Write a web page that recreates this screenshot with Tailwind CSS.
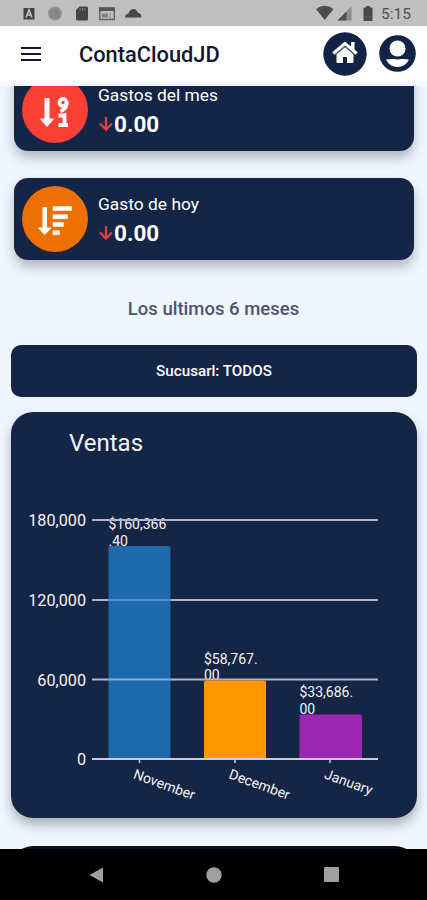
<!DOCTYPE html>
<html lang="es">
<head>
    <meta charset="UTF-8">
    <meta name="viewport" content="width=device-width, initial-scale=1.0">
    <title>ContaCloudJD</title>
    <script src="https://cdn.jsdelivr.net/npm/@tailwindcss/browser@4"></script>
    <style>
        body {
            font-family: Roboto, sans-serif;
        }
    </style>
</head>
<body class="bg-black">
    <div class="flex flex-col w-[427px] h-[900px] overflow-hidden">

        <!-- Barra de estado -->
        <div class="flex items-center justify-between h-[26px] shrink-0 bg-[#bfbfbf] pl-[22px] pr-[16px] text-[#505050]">
            <svg class="h-[26px] w-[122px]" viewBox="0 0 122 26">
                <rect x="1.500" y="8" width="11" height="11.500" fill="#424242"/>
                <path d="M4 17.500L7 10l3 7.500M5 15h4" stroke="#bfbfbf" stroke-width="1.600" fill="none"/>
                <circle cx="33" cy="13.500" r="7" fill="#929292"/>
                <circle cx="33" cy="13.500" r="5" fill="#858585"/>
                <path d="M57.500 6.500h7a1.500 1.500 0 0 1 1.500 1.500v11a1.500 1.500 0 0 1-1.500 1.500h-9a1.500 1.500 0 0 1-1.500-1.500V10z" fill="#444"/>
                <path d="M58 8v2.500M60.500 8v2.500M63 8v2.500" stroke="#858585" stroke-width="1"/>
                <rect x="77.800" y="8" width="14.500" height="11.500" fill="none" stroke="#666" stroke-width="1.500"/>
                <path d="M77 7.500h16v3.500H77z" fill="#555"/>
                <path d="M80 13.500h6v4h-6z" fill="#808080"/>
                <path d="M88 13v6" stroke="#8b8b8b"/>
                <path d="M103 17.500c0-2.500 1.500-3.700 3.500-4 1-2.800 2.600-4.500 4.700-4.500 2.300 0 4 1.500 4.500 3.700 2.300 0 3.800 2 3.800 4.800z" fill="#484848"/>
            </svg>
            <div class="flex items-center gap-[8px]">
                <svg class="h-[26px] w-[58px]" viewBox="0 0 58 26">
                    <path d="M1 9Q9.700 2.500 18.500 9L9.700 20z" fill="#4d4d4d"/>
                    <path d="M36.500 6.500V20.500H22.500z" fill="#8c8c8c"/>
                    <path d="M31.500 11.500v9h-9z" fill="#4f4f4f"/>
                    <path d="M49 7.500h2V6h4v1.500h2a.5.5 0 0 1 .5.500v12.500a.5.500 0 0 1-.5.500h-8a.5.500 0 0 1-.5-.5V8a.5.500 0 0 1 .5-.5z" fill="#4a4a4a"/>
                </svg>
                <span class="text-[15.500px] leading-[26px] pt-[2px]">5:15</span>
            </div>
        </div>

        <!-- Encabezado -->
        <header class="flex items-center h-[55px] shrink-0 bg-white pl-[21px] pr-[11px]">
            <svg class="w-[20px] h-[14px]" viewBox="0 0 20 14">
                <path d="M0 1h20M0 7h20M0 13h20" stroke="#15152f" stroke-width="1.800"/>
            </svg>
            <h1 class="ml-[38px] pt-[2px] text-[21.800px] leading-[28px] font-medium text-[#15152f]">ContaCloudJD</h1>
            <div class="ml-auto flex items-center gap-[12px]">
                <svg class="w-[44px] h-[44px]" viewBox="0 0 44 44">
                    <circle cx="22" cy="22" r="21.700" fill="#122346"/>
                    <path d="M28 10h3.500v9L28 16z" fill="#fff"/>
                    <path d="M10.300 21.500L22 11.300l11.700 10.200" stroke="#fff" stroke-width="3" stroke-linejoin="round" fill="none"/>
                    <path d="M22 15.200l8.500 7.300v7.500a1 1 0 0 1-1 1H24v-6h-4v6h-5.500a1 1 0 0 1-1-1v-7.500z" fill="#fff"/>
                    <path d="M12.500 22.500L22 14.300l9.500 8.200" stroke="#7d869b" stroke-width=".8" fill="none"/>
                </svg>
                <svg class="w-[37px] h-[37px]" viewBox="0 0 37 37">
                    <circle cx="18.500" cy="18.500" r="18.300" fill="#122346"/>
                    <circle cx="18.500" cy="13.500" r="8" fill="#fff"/>
                    <path d="M7 24.600q5 -1 7.500-.6 4 .8 8 0 2.500-.4 7.500.6-3.500 7.400-11.500 7.400T7 24.600z" fill="#fff"/>
                </svg>
            </div>
        </header>
        <div class="h-[5px] shrink-0 bg-[#f5f9ff]"></div>

        <!-- Contenido -->
        <main class="flex flex-col h-[763px] shrink-0 overflow-hidden bg-[#f0f6ff]">
            <section class="flex flex-col gap-[27px] -mt-[17px] mx-[14px]">
                <div class="flex items-center h-[82px] w-[400px] rounded-[14px] bg-[#142545] pl-[8px] shadow-[0_7px_12px_rgba(0,0,0,0.25)]">
                    <svg class="w-[66px] h-[66px]" viewBox="0 0 66 66">
                        <circle cx="33" cy="33" r="33" fill="#fb4034"/>
                        <path d="M23 21.500h4V42h4.500L25 49.500 18.500 42H23z" fill="#fff" stroke="#fff" stroke-linejoin="round"/>
                        <circle cx="41" cy="25.500" r="3.600" fill="none" stroke="#fff" stroke-width="3.600"/>
                        <path d="M44.800 26q0 6-6.300 8.200" fill="none" stroke="#fff" stroke-width="3.600"/>
                        <path d="M36.500 38.500h3l3-.5v10M36.500 48h9.500" fill="none" stroke="#fff" stroke-width="3.800"/>
                    </svg>
                    <div class="ml-[10px] pt-[1px] text-white">
                        <p class="text-[17.400px] leading-[26px]">Gastos del mes</p>
                        <p class="flex items-center pt-[1px] text-[22.500px] leading-[31px] font-bold">
                            <svg class="w-[16px] h-[18px]" viewBox="0 0 16 18"><path d="M8 2v12M2 8.500l6 6 6-6" fill="none" stroke="#e53e44" stroke-width="2.300"/></svg>0.00
                        </p>
                    </div>
                </div>
                <div class="flex items-center h-[82px] w-[400px] rounded-[14px] bg-[#142545] pl-[8px] shadow-[0_7px_12px_rgba(0,0,0,0.25)]">
                    <svg class="w-[66px] h-[66px]" viewBox="0 0 66 66">
                        <circle cx="33" cy="33" r="33" fill="#ee6f02"/>
                        <path d="M21 21.500h3.500V42h4.500L22.700 48.500 16.500 42H21z" fill="#fff" stroke="#fff" stroke-linejoin="round"/>
                        <path d="M31 20.500h18.500v4H31zM31 28.700h14.500v4H31zM31 36.500h10.500v4H31zM31 44.700h6.500v4H31z" fill="#fff" stroke="#fff" stroke-width=".6" stroke-linejoin="round"/>
                    </svg>
                    <div class="ml-[10px] pt-[1px] text-white">
                        <p class="text-[17.400px] leading-[26px]">Gasto de hoy</p>
                        <p class="flex items-center pt-[1px] text-[22.500px] leading-[31px] font-bold">
                            <svg class="w-[16px] h-[18px]" viewBox="0 0 16 18"><path d="M8 2v12M2 8.500l6 6 6-6" fill="none" stroke="#e53e44" stroke-width="2.300"/></svg>0.00
                        </p>
                    </div>
                </div>
            </section>

            <h2 class="mt-[37px] text-center text-[18.500px] leading-[24px] font-medium text-[#4c5470]">Los ultimos 6 meses</h2>

            <button class="mt-[24px] ml-[11px] w-[406px] h-[52px] shrink-0 rounded-[10px] bg-[#142545] pt-[1px] text-[15.200px] font-medium text-white">Sucusarl: TODOS</button>

            <!-- Grafica de ventas -->
            <section class="mt-[15px] ml-[11px] w-[406px] h-[406px] shrink-0 rounded-[22px] bg-[#142545] shadow-[0_7px_12px_rgba(0,0,0,0.28)]">
                <svg class="w-[406px] h-[406px]" viewBox="0 0 406 406" fill="#f4f4f8">
                    <text x="58" y="39" font-size="24">Ventas</text>

                    <g font-size="16.200" text-anchor="end">
                        <text x="75" y="114">180,000</text>
                        <text x="75" y="194">120,000</text>
                        <text x="75" y="273.500">60,000</text>
                        <text x="75" y="353">0</text>
                    </g>

                    <g font-size="14">
                        <text x="97.500" y="117">$160,366</text>
                        <text x="97.500" y="133.500">.40</text>
                        <text x="193" y="251.500">$58,767.</text>
                        <text x="193" y="268">00</text>
                        <text x="288.500" y="285">$33,686.</text>
                        <text x="288.500" y="301.500">00</text>
                    </g>

                    <path d="M81 108h286M81 188h286M81 267.500h286" stroke="#b4b3cb" stroke-width="2"/>
                    <path d="M97.500 347V136a2 2 0 0 1 2-2h58a2 2 0 0 1 2 2v211z" fill="#1e68ac"/>
                    <path d="M97.500 188h62" stroke="#4f92d4" stroke-width="2"/>
                    <path d="M97.500 267.500h62" stroke="#7fb0dd" stroke-width="2"/>
                    <path d="M193 347V270.500a2 2 0 0 1 2-2h58a2 2 0 0 1 2 2V347z" fill="#ff9800"/>
                    <path d="M288.500 347V304.500a2 2 0 0 1 2-2H349a2 2 0 0 1 2 2V347z" fill="#9c27b0"/>
                    <path d="M81 347h286" stroke="#cdcbdd" stroke-width="2"/>
                    <path d="M128.500 347v4M224 347v4M319 347v4" stroke="#cdcbdd" stroke-width="1.500"/>

                    <g font-size="14">
                        <text transform="translate(121.500 366) rotate(20)">November</text>
                        <text transform="translate(217 366) rotate(20)">December</text>
                        <text transform="translate(312.500 366) rotate(20)">January</text>
                    </g>
                </svg>
            </section>

            <section class="mt-[28px] ml-[11px] w-[406px] h-[60px] shrink-0 rounded-[22px] bg-[#06102b]"></section>
        </main>

        <!-- Navegacion del sistema -->
        <nav class="flex items-center justify-between grow bg-black pl-[89px] pr-[88px]">
            <svg class="w-[14px] h-[16px]" viewBox="0 0 14 16"><path d="M14 .500v15L.500 8z" fill="#a0a0a0"/></svg>
            <svg class="w-[16px] h-[16px]" viewBox="0 0 16 16"><circle cx="8" cy="8" r="7.700" fill="#a0a0a0"/></svg>
            <svg class="w-[15px] h-[15px]" viewBox="0 0 15 15"><rect width="15" height="15" rx="1" fill="#a0a0a0"/></svg>
        </nav>
    </div>
</body>
</html>
